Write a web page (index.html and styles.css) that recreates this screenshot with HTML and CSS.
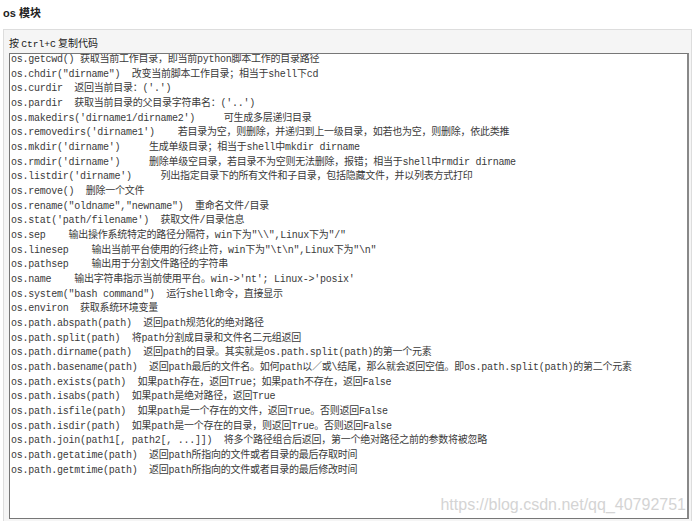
FILE: index.html
```html
<!DOCTYPE html>
<html lang="zh-CN">
<head>
    <meta charset="UTF-8">
    <title>os 模块</title>
    <link rel="stylesheet" href="styles.css">
</head>
<body>
    <h4 class="title">os 模块</h4>

    <div class="code-box">
        <div class="copy-tip">按 <span class="mono">Ctrl+C</span> 复制代码</div>
        <div class="code-area">
<pre class="code">os.getcwd() 获取当前工作目录，即当前python脚本工作的目录路径
os.chdir("dirname")  改变当前脚本工作目录；相当于shell下cd
os.curdir  返回当前目录：('.')
os.pardir  获取当前目录的父目录字符串名：('..')
os.makedirs('dirname1/dirname2')     可生成多层递归目录
os.removedirs('dirname1')    若目录为空，则删除，并递归到上一级目录，如若也为空，则删除，依此类推
os.mkdir('dirname')     生成单级目录；相当于shell中mkdir dirname
os.rmdir('dirname')     删除单级空目录，若目录不为空则无法删除，报错；相当于shell中rmdir dirname
os.listdir('dirname')     列出指定目录下的所有文件和子目录，包括隐藏文件，并以列表方式打印
os.remove()  删除一个文件
os.rename("oldname","newname")  重命名文件/目录
os.stat('path/filename')  获取文件/目录信息
os.sep    输出操作系统特定的路径分隔符，win下为"\\",Linux下为"/"
os.linesep    输出当前平台使用的行终止符，win下为"\t\n",Linux下为"\n"
os.pathsep    输出用于分割文件路径的字符串
os.name    输出字符串指示当前使用平台。win-&gt;'nt'; Linux-&gt;'posix'
os.system("bash command")  运行shell命令，直接显示
os.environ  获取系统环境变量
os.path.abspath(path)  返回path规范化的绝对路径
os.path.split(path)  将path分割成目录和文件名二元组返回
os.path.dirname(path)  返回path的目录。其实就是os.path.split(path)的第一个元素
os.path.basename(path)  返回path最后的文件名。如何path以／或\结尾，那么就会返回空值。即os.path.split(path)的第二个元素
os.path.exists(path)  如果path存在，返回True；如果path不存在，返回False
os.path.isabs(path)  如果path是绝对路径，返回True
os.path.isfile(path)  如果path是一个存在的文件，返回True。否则返回False
os.path.isdir(path)  如果path是一个存在的目录，则返回True。否则返回False
os.path.join(path1[, path2[, ...]])  将多个路径组合后返回，第一个绝对路径之前的参数将被忽略
os.path.getatime(path)  返回path所指向的文件或者目录的最后存取时间
os.path.getmtime(path)  返回path所指向的文件或者目录的最后修改时间</pre>
            <div class="watermark">https://blog.csdn.net/qq_40792751</div>
        </div>
    </div>
</body>
</html>
```

FILE: styles.css
```css
* {
    margin: 0;
    padding: 0;
    box-sizing: border-box;
}

body {
    font-family: "Liberation Sans", "Noto Sans CJK SC", sans-serif;
    background-color: #ffffff;
    color: #333333;
    padding: 0 3px;
}

.title {
    font-size: 11px;
    font-weight: bold;
    line-height: 14px;
    padding-top: 6px;
    height: 29px;
    color: #222222;
}

.code-box {
    background-color: #f5f5f5;
    border: 1px solid #dddddd;
    padding: 5px 2px 6px 5px;
}

.copy-tip {
    font-size: 10px;
    line-height: 15px;
    color: #222222;
    font-family: "Noto Sans CJK SC", sans-serif;
    margin-bottom: 1px;
}

.mono {
    font-family: "Liberation Mono", monospace;
    font-size: 9.6px;
}

.code-area {
    position: relative;
    background-color: #ffffff;
    border: 1px solid #777777;
    border-right: 2px solid #888888;
    height: 466px;
    padding: 0 0 0 1px;
    overflow: hidden;
}

.code {
    font-family: "Liberation Mono", "Noto Sans CJK SC", monospace;
    font-size: 10px;
    letter-spacing: -0.25px;
    line-height: 14.67px;
    margin-top: -1px;
    color: #3a3a3a;
    white-space: pre;
}

.watermark {
    position: absolute;
    right: 1px;
    bottom: 4px;
    font-family: "Liberation Sans", sans-serif;
    font-size: 16px;
    color: #d4d4d4;
}
```
